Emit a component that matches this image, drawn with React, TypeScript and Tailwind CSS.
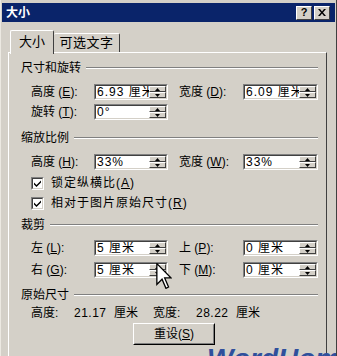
import React from 'react';

// Win2000-style "大小" dialog (Word picture size tab)

function Spinner() {
  return (
    <div className="flex h-full w-[17px] shrink-0 flex-col">
      {[0, 1].map((i) => (
        <div
          key={i}
          className="flex h-1/2 items-center justify-center border border-t-white border-l-white border-r-[#404040] border-b-[#404040] bg-[#d4d0c8]"
        >
          <svg width="5" height="3" viewBox="0 0 5 3">
            {i === 0 ? <path d="M2.5 0L5 3H0Z" fill="#000" /> : <path d="M0 0H5L2.5 3Z" fill="#000" />}
          </svg>
        </div>
      ))}
    </div>
  );
}

function Field({ value, w = 'w-[74px]' }: { value: string; w?: string }) {
  return (
    <div className={`flex h-[16px] ${w} shrink-0 border border-t-[#808080] border-l-[#808080] border-b-white border-r-white`}>
      <div className="flex min-w-0 flex-1 border border-t-[#404040] border-l-[#404040] border-b-[#d4d0c8] border-r-[#d4d0c8] bg-white">
        <span className="min-w-0 flex-1 overflow-hidden whitespace-nowrap pl-[1px] text-[12px] leading-[12px] tracking-[1px]">
          {value}
        </span>
        <Spinner />
      </div>
    </div>
  );
}

function Label({ text, k, w = 'w-[63px]' }: { text: string; k: string; w?: string }) {
  return (
    <span className={`${w} shrink-0 whitespace-nowrap text-[12px] leading-[14px]`}>
      {text} (<u>{k}</u>):
    </span>
  );
}

function Row({ a, b }: { a: [string, string, string]; b?: [string, string, string] }) {
  return (
    <div className="flex h-[16px] items-center pl-[22px]">
      <Label text={a[0]} k={a[1]} />
      <Field value={a[2]} />
      {b && (
        <>
          <span className="w-[11px] shrink-0" />
          <Label text={b[0]} k={b[1]} w="w-[64px]" />
          <Field value={b[2]} w="w-[75px]" />
        </>
      )}
    </div>
  );
}

function Group({ title }: { title: string }) {
  return (
    <div className="flex h-[14px] items-center pl-[12px] pr-[8px]">
      <span className="whitespace-nowrap text-[12px] leading-[14px]">{title}</span>
      <div className="ml-[5px] flex-1 border-t border-b border-t-[#808080] border-b-white" />
    </div>
  );
}

function Check({ text, k }: { text: string; k: string }) {
  return (
    <div className="flex h-[16px] items-center pl-[22px]">
      <div className="h-[13px] w-[13px] border border-t-[#808080] border-l-[#808080] border-b-white border-r-white">
        <div className="flex h-full w-full items-center justify-center border border-t-[#404040] border-l-[#404040] border-b-[#d4d0c8] border-r-[#d4d0c8] bg-white">
          <svg width="7" height="7" viewBox="0 0 7 7">
            <path d="M0 2.5L2.5 5L7 0.5V2.5L2.5 7L0 4.5Z" fill="#000" />
          </svg>
        </div>
      </div>
      <span className="ml-[7px] whitespace-nowrap text-[12px] leading-[14px] tracking-[1px]">
        {text}(<u>{k}</u>)
      </span>
    </div>
  );
}

export default function App() {
  return (
    <div className="relative h-[356px] w-[337px] overflow-hidden border-l border-r border-l-[#ece9e2] border-r-[#404040] bg-[#d4d0c8] px-[1px] pt-[3px] font-['Liberation_Sans','Noto_Sans_CJK_SC',sans-serif] text-black">
      {/* Title bar */}
      <div className="flex h-[19px] items-center bg-[#0a246a] pl-[4px] pr-[5px]">
        <span className="text-[12px] font-bold leading-[14px] text-white">大小</span>
        <div className="ml-auto flex gap-[2px]">
          <div className="flex h-[14px] w-[16px] items-center justify-center border border-t-white border-l-white border-r-[#404040] border-b-[#404040] bg-[#d4d0c8] text-[11px] font-bold leading-[11px]">
            ?
          </div>
          <div className="flex h-[14px] w-[16px] items-center justify-center border border-t-white border-l-white border-r-[#404040] border-b-[#404040] bg-[#d4d0c8]">
            <svg width="8" height="7" viewBox="0 0 8 7">
              <path d="M0 0H2L4 2.5L6 0H8L5 3.5L8 7H6L4 4.5L2 7H0L3 3.5Z" fill="#000" />
            </svg>
          </div>
        </div>
      </div>

      {/* Tabs */}
      <div className="relative z-10 mt-[8px] flex h-[22px] items-end pl-[8px]">
        <div className="flex h-[24px] w-[44px] -mb-[2px] items-start justify-center rounded-t-[2px] border-l border-t border-r border-l-white border-t-white border-r-[#404040] bg-[#d4d0c8] pt-[4px] text-[13px] leading-[14px]">
          大小
        </div>
        <div className="flex h-[19px] w-[66px] items-start justify-center rounded-t-[2px] border-t border-r border-t-white border-r-[#404040] pt-[2px] text-[13px] leading-[14px] tracking-[0.5px]">
          可选文字
        </div>
      </div>

      {/* Panel */}
      <div className="ml-[6px] flex h-[320px] w-[319px] flex-col border-l border-t border-r border-l-white border-t-white border-r-[#404040] pt-[8px]">
        <Group title="尺寸和旋转" />
        <div className="mt-[9px]">
          <Row a={['高度', 'E', '6.93 厘米']} b={['宽度', 'D', '6.09 厘米']} />
        </div>
        <div className="mt-[4px]">
          <Row a={['旋转', 'T', '0°']} />
        </div>
        <div className="mt-[11px]">
          <Group title="缩放比例" />
        </div>
        <div className="mt-[9px]">
          <Row a={['高度', 'H', '33%']} b={['宽度', 'W', '33%']} />
        </div>
        <div className="mt-[5px]">
          <Check text="锁定纵横比" k="A" />
        </div>
        <div className="mt-[4px]">
          <Check text="相对于图片原始尺寸" k="R" />
        </div>
        <div className="mt-[7px]">
          <Group title="裁剪" />
        </div>
        <div className="mt-[8px]">
          <Row a={['左', 'L', '5 厘米']} b={['上', 'P', '0 厘米']} />
        </div>
        <div className="mt-[6px]">
          <Row a={['右', 'G', '5 厘米']} b={['下', 'M', '0 厘米']} />
        </div>
        <div className="mt-[10px]">
          <Group title="原始尺寸" />
        </div>
        <div className="mt-[4px] flex h-[14px] items-center pl-[22px] text-[12px] leading-[14px] whitespace-nowrap">
          <span className="w-[43px]">高度:</span>
          <span className="w-[40px] tracking-[0.5px]">21.17</span>
          <span className="w-[39px]">厘米</span>
          <span className="w-[43px]">宽度:</span>
          <span className="w-[40px] tracking-[0.5px]">28.22</span>
          <span>厘米</span>
        </div>
        <div className="mt-[3px] flex pl-[124px]">
          <div className="h-[22px] w-[82px] border border-t-white border-l-white border-r-black border-b-black">
            <div className="flex h-full w-full items-center justify-center border border-t-[#d4d0c8] border-l-[#d4d0c8] border-r-[#808080] border-b-[#808080] text-[12px] leading-[14px]">
              重设(<u>S</u>)
            </div>
          </div>
        </div>
      </div>

      {/* watermark */}
      <div className="absolute left-[206px] top-[345px] whitespace-nowrap text-[28px] font-bold italic leading-[28px] text-[#2f4f9c]">
        WordHome
      </div>

      {/* mouse cursor */}
      <svg className="absolute left-[155px] top-[263px]" width="16" height="26" viewBox="0 0 12 20">
        <path d="M0.5 0.5V16.5L4.5 12.5L7.5 19.5L9.5 18.5L6.5 11.5H11.5Z" fill="#fff" stroke="#000" strokeWidth="1" />
      </svg>
    </div>
  );
}
